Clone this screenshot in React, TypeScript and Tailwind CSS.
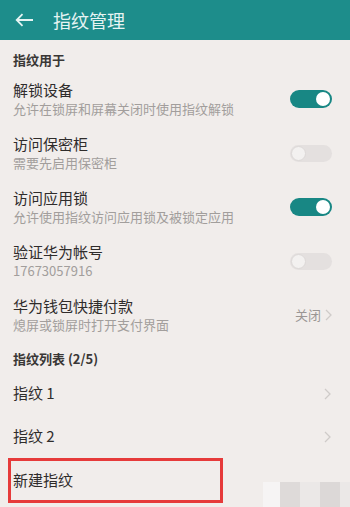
import React from "react";

const font = { fontFamily: '"Noto Sans CJK SC", "Noto Sans", sans-serif' };

function Toggle({ on }: { on: boolean }) {
  if (on) {
    return (
      <div className="flex h-[18px] w-[42px] items-center justify-end rounded-full bg-[#188784] pr-[2px]">
        <div className="h-[14px] w-[14px] rounded-full bg-white" />
      </div>
    );
  }
  return (
    <div className="flex h-[17px] w-[42px] items-center rounded-full bg-[#e4e0df] pl-[1px]">
      <div className="h-[15px] w-[15px] rounded-full border border-[#dcd8d7] bg-[#f3f1f0]" />
    </div>
  );
}

function Chevron() {
  return (
    <svg width="7" height="12" viewBox="0 0 7 12" fill="none">
      <path d="M1 1l5 5-5 5" stroke="#cfcbc9" strokeWidth="1.3" />
    </svg>
  );
}

type Row = { title: string; sub: string; right: React.ReactNode };

const rows: Row[] = [
  { title: "解锁设备", sub: "允许在锁屏和屏幕关闭时使用指纹解锁", right: <Toggle on /> },
  { title: "访问保密柜", sub: "需要先启用保密柜", right: <Toggle on={false} /> },
  { title: "访问应用锁", sub: "允许使用指纹访问应用锁及被锁定应用", right: <Toggle on /> },
  { title: "验证华为帐号", sub: "17673057916", right: <Toggle on={false} /> },
  {
    title: "华为钱包快捷付款",
    sub: "熄屏或锁屏时打开支付界面",
    right: (
      <div className="flex items-center gap-[4px] text-[13px] text-[#9a9694]">
        <span>关闭</span>
        <Chevron />
      </div>
    ),
  },
];

export default function App() {
  return (
    <div className="relative h-[507px] w-[350px] overflow-hidden bg-[#f1edeb]" style={font}>
      <div className="flex h-[40px] items-center bg-[#1d8d8b] pl-[15px]">
        <svg width="19" height="14" viewBox="0 0 19 14" fill="none">
          <path d="M18 7H2M7.5 1.2L1.7 7l5.8 5.8" stroke="#e6f4f3" strokeWidth="1.8" />
        </svg>
        <span className="ml-[19px] text-[18px] leading-none text-[#e6f4f3]">指纹管理</span>
      </div>

      <div className="h-[32px] pl-[13px] pt-[11px] text-[13px] font-bold leading-[18px] text-[#3a3736]">
        指纹用于
      </div>

      {rows.map((r) => (
        <div key={r.title} className="flex h-[54px] items-center justify-between pl-[13px] pr-[18px]">
          <div className="flex flex-col gap-[1px]">
            <span className="text-[15px] leading-[18px] text-[#2f2c2b]">{r.title}</span>
            <span className="text-[13px] leading-[18px] text-[#a29e9c]">{r.sub}</span>
          </div>
          {r.right}
        </div>
      ))}

      <div className="h-[30px] pl-[13px] pt-[8px] text-[13px] font-bold leading-[18px] text-[#3a3736]">
        指纹列表 (2/5)
      </div>

      {["指纹 1", "指纹 2"].map((t) => (
        <div key={t} className="flex h-[43px] items-center justify-between pl-[13px] pr-[19px]">
          <span className="text-[15px] text-[#2f2c2b]">{t}</span>
          <Chevron />
        </div>
      ))}

      <div className="ml-[8px] flex h-[45px] w-[215px] items-center border-[3px] border-[#e63a3a] pl-[2px]">
        <span className="text-[15px] text-[#2f2c2b]">新建指纹</span>
      </div>

      <div className="absolute bottom-0 right-0 flex h-[25px]">
        <div className="w-[17px] bg-[#f6f4f4]" />
        <div className="w-[20px] bg-[#dedad9]" />
        <div className="w-[20px] bg-[#ebe8e7]" />
        <div className="w-[20px] bg-[#dcd8d7]" />
        <div className="w-[10px] bg-[#ebe8e7]" />
      </div>
    </div>
  );
}
